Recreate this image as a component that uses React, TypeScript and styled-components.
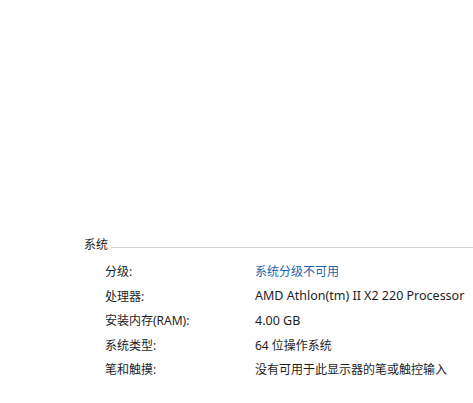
import React from "react";
import { createGlobalStyle, styled } from "styled-components";

const GlobalStyle = createGlobalStyle`
  html, body {
    margin: 0;
    padding: 0;
    background: #ffffff;
  }
  body {
    font-family: "Noto Sans", "Noto Sans CJK SC", sans-serif;
    font-size: 12px;
    color: #1e1e1e;
  }
`;

type Row = { label: string; value: string; link?: boolean; latin?: boolean };

const rows: Row[] = [
  { label: "分级:", value: "系统分级不可用", link: true },
  { label: "处理器:", value: "AMD Athlon(tm) II X2 220 Processor", latin: true },
  { label: "安装内存(RAM):", value: "4.00 GB", latin: true },
  { label: "系统类型:", value: "64 位操作系统" },
  { label: "笔和触摸:", value: "没有可用于此显示器的笔或触控输入" },
];

export default function App() {
  return (
    <>
      <GlobalStyle />
      <Page>
        <Section>
          <SectionHeader>
            <SectionTitle>系统</SectionTitle>
            <Rule />
          </SectionHeader>
          <InfoGrid>
            {rows.map((r) => (
              <React.Fragment key={r.label}>
                <Label>{r.label}</Label>
                <Value $link={r.link} $latin={r.latin}>
                  {r.value}
                </Value>
              </React.Fragment>
            ))}
          </InfoGrid>
        </Section>
      </Page>
    </>
  );
}

const Page = styled.div`
  width: 473px;
  height: 403px;
  overflow: hidden;
  padding: 236px 0 0 84px;
  box-sizing: border-box;
`;

const Section = styled.div`
  display: flex;
  flex-direction: column;
`;

const SectionHeader = styled.div`
  display: flex;
  align-items: center;
  height: 17px;
`;

const SectionTitle = styled.span`
  line-height: 17px;
`;

const Rule = styled.div`
  flex: 1;
  height: 1px;
  margin-left: 3px;
  margin-top: 5px;
  background: #d2d2d2;
`;

const InfoGrid = styled.div`
  display: grid;
  grid-template-columns: 150px auto;
  grid-auto-rows: 24.5px;
  align-items: center;
  padding: 6px 0 0 21px;
`;

const Label = styled.span`
  white-space: nowrap;
`;

const Value = styled.span<{ $link?: boolean; $latin?: boolean }>`
  white-space: nowrap;
  font-size: ${(p) => (p.$latin ? "12.5px" : "12px")};
  color: ${(p) => (p.$link ? "#1f63a8" : "#1e1e1e")};
`;
